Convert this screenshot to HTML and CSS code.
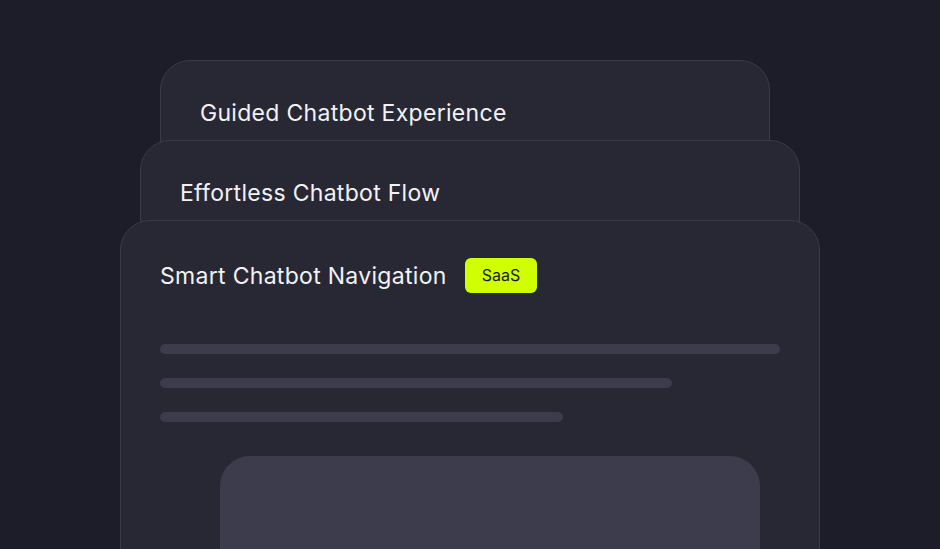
FILE: index.html
```html
<!DOCTYPE html>
<html lang="en">
<head>
  <meta charset="UTF-8" />
  <meta name="viewport" content="width=device-width, initial-scale=1.0"/>
  <title>Chatbot Stack</title>
  <link rel="stylesheet" href="styles.css">
</head>
<body>
  <div class="stack">
    <div class="card card-back">
      <h3 class="card-title">Guided Chatbot Experience</h3>
    </div>
    <div class="card card-mid">
      <h3 class="card-title">Effortless Chatbot Flow</h3>
    </div>
    <div class="card card-front">
      <div class="card-head">
        <h3 class="card-title">Smart Chatbot Navigation</h3>
        <span class="badge">SaaS</span>
      </div>
      <div class="lines">
        <div class="line line-full"></div>
        <div class="line line-mid"></div>
        <div class="line line-short"></div>
      </div>
      <div class="preview"></div>
    </div>
  </div>
</body>
</html>
```

FILE: styles.css
```css
:root {
  --bg: #1c1d29;
  --card: #282834;
  --border: #3a3a48;
  --line: #3d3c4c;
  --text: #f2f2f4;
  --accent: #d0ff00;
}

* {
  box-sizing: border-box;
}

html, body {
  height: 100%;
}

body {
  margin: 0;
  background: var(--bg);
  color: var(--text);
  font-family: 'Inter', 'Noto Sans', sans-serif;
  overflow: hidden;
}

.stack {
  display: flex;
  flex-direction: column;
  align-items: flex-start;
  padding-top: 60px;
}

.card {
  background: var(--card);
  border: 1px solid var(--border);
  border-radius: 30px;
  padding: 39px 39px 0;
}

.card-back {
  width: 610px;
  height: 120px;
  margin-left: 160px;
  margin-bottom: -40px;
}

.card-mid {
  width: 660px;
  height: 120px;
  margin-left: 140px;
  margin-bottom: -40px;
}

.card-front {
  width: 700px;
  margin-left: 120px;
  padding-top: 37px;
  height: 400px;
}

.card-title {
  margin: 0;
  font-size: 23px;
  font-weight: 400;
  line-height: 26px;
  letter-spacing: 0.3px;
}

.card-head {
  display: flex;
  align-items: center;
  gap: 18px;
  height: 35px;
}

.badge {
  background: var(--accent);
  color: #1a1b12;
  font-size: 16px;
  line-height: 35px;
  height: 35px;
  padding: 0 17px;
  border-radius: 6px;
}

.lines {
  display: flex;
  flex-direction: column;
  gap: 24px;
  margin-top: 51px;
}

.line {
  height: 10px;
  border-radius: 5px;
  background: var(--line);
}

.line-full { width: 620px; }
.line-mid { width: 512px; }
.line-short { width: 403px; }

.preview {
  margin: 34px 0 0 60px;
  width: 540px;
  height: 200px;
  background: var(--line);
  border-radius: 30px 30px 0 0;
}
```
